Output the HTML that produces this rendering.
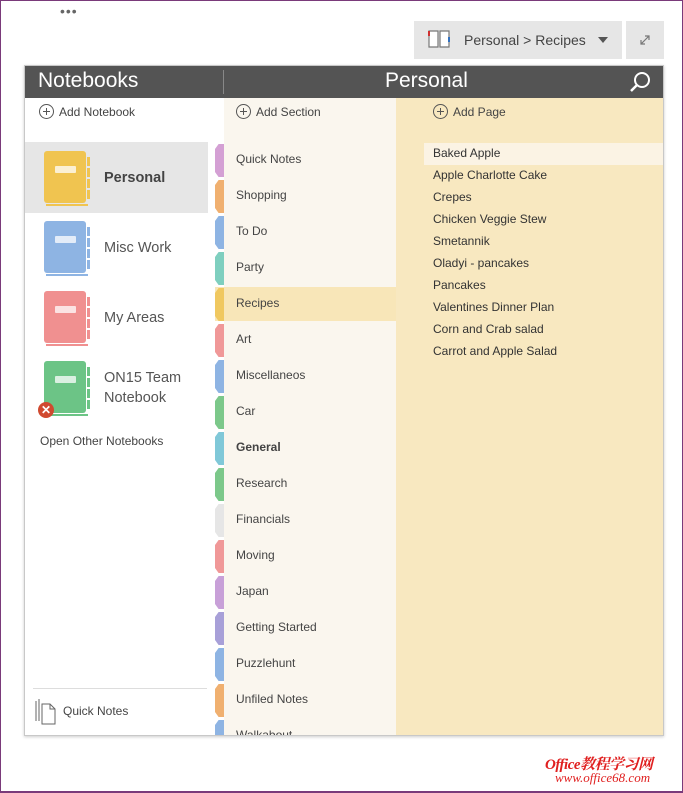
<!DOCTYPE html>
<html><head><style>
*{margin:0;padding:0;box-sizing:border-box}
body{width:683px;height:793px;position:relative;background:#fff;font-family:"Segoe UI","Liberation Sans",sans-serif;overflow:hidden;color:#444}
.frame{position:absolute;left:0;top:0;width:683px;height:793px;border:1px solid #7a3a7a;border-width:1px 1px 2px 1px}
.abs{position:absolute}
.panel{position:absolute;left:24px;top:65px;width:640px;height:671px;border:1px solid #c8c8c8;box-shadow:0 1px 3px rgba(0,0,0,.2);overflow:hidden;background:#fff}
.hdr{position:absolute;left:0;top:0;width:640px;height:32px;background:#545454;color:#fff}
.sec{position:absolute;left:199px;top:32px;width:172px;height:640px;background:#faf6ee}
.pgs{position:absolute;left:371px;top:32px;width:269px;height:640px;background:#f8e8c0}
.add{position:absolute;font-size:12px;color:#444;display:flex;align-items:center;gap:5px}
.plus{width:15px;height:15px;border:1.3px solid #555;border-radius:50%;position:relative}
.plus:before{content:"";position:absolute;left:5.5px;top:2.5px;width:1.3px;height:7.5px;background:#555}
.plus:after{content:"";position:absolute;left:2.5px;top:5.5px;width:7.5px;height:1.3px;background:#555}
.st{position:absolute;left:190px;width:9px;height:33px;clip-path:polygon(100% 0,40% 0,0 15%,0 85%,40% 100%,100% 100%)}
.sl{position:absolute;left:211px;font-size:12px;color:#444}
.pl{position:absolute;left:408px;font-size:12px;color:#333}
.book{position:absolute;width:46px;height:56px}
.book .c{position:absolute;left:0;top:0;width:42px;height:52px;border-radius:3px}
.book .lb{position:absolute;left:11px;top:15px;width:21px;height:7px;background:rgba(255,255,255,.75);border-radius:1px}
.book .e{position:absolute;left:43px;top:6px;width:3px;height:44px;background-image:repeating-linear-gradient(to bottom,currentColor 0 9px,transparent 9px 11px)}
.book .b{position:absolute;left:2px;top:53px;width:42px;height:2px}
.nb{position:absolute;left:79px;font-size:14.5px;color:#555;line-height:20px}
</style></head><body>
<div class="frame"></div>
<div class="abs" style="left:60px;top:3px;font-size:14px;color:#666;letter-spacing:1px">•••</div>
<div class="abs" style="left:414px;top:21px;width:208px;height:38px;background:#e6e6e6"></div>
<svg class="abs" style="left:428px;top:29px" width="24" height="20" viewBox="0 0 24 20"><path d="M1 2h9v16H1zM12 2h9v16h-9z" fill="#fff" stroke="#777" stroke-width="1.2"/><path d="M1 2v5" stroke="#d03030" stroke-width="2"/><path d="M21 8v5" stroke="#3070c0" stroke-width="2"/></svg>
<div class="abs" style="left:464px;top:32px;font-size:14px;color:#444">Personal &gt; Recipes</div>
<div class="abs" style="left:598px;top:37px;width:0;height:0;border-left:5px solid transparent;border-right:5px solid transparent;border-top:6px solid #555"></div>
<div class="abs" style="left:626px;top:21px;width:38px;height:38px;background:#e6e6e6"></div>
<svg class="abs" style="left:638px;top:33px" width="14" height="14"><path d="M3 11L11 3M7 3h4v4M3 7v4h4" stroke="#777" fill="none" stroke-width="1.2"/></svg>
<div class="panel">
 <div class="hdr">
  <div class="abs" style="left:13px;top:3px;font-size:21px">Notebooks</div>
  <div class="abs" style="left:198px;top:4px;width:1px;height:24px;background:#888"></div>
  <div class="abs" style="left:360px;top:3px;font-size:21px">Personal</div>
  <svg class="abs" style="left:603px;top:5px" width="24" height="22"><circle cx="14" cy="9" r="7" stroke="#fff" stroke-width="2" fill="none"/><path d="M9 14L3 20" stroke="#fff" stroke-width="2.5"/></svg>
 </div>
 <div class="add" style="left:14px;top:38px"><span class="plus"></span>Add Notebook</div>
 <div class="abs" style="left:0;top:76px;width:183px;height:71px;background:#e6e6e6"></div>
 <div class="book" style="left:19px;top:85px;color:#f0c450"><div class="c" style="background:#f0c450"></div><div class="lb"></div><div class="e"></div><div class="b" style="background:#f0c450"></div></div>
 <div class="nb" style="top:102px;font-weight:bold;color:#444">Personal</div>
 <div class="book" style="left:19px;top:155px;color:#8eb4e3"><div class="c" style="background:#8eb4e3"></div><div class="lb"></div><div class="e"></div><div class="b" style="background:#8eb4e3"></div></div>
 <div class="nb" style="top:172px">Misc Work</div>
 <div class="book" style="left:19px;top:225px;color:#f09090"><div class="c" style="background:#f09090"></div><div class="lb"></div><div class="e"></div><div class="b" style="background:#f09090"></div></div>
 <div class="nb" style="top:242px">My Areas</div>
 <div class="book" style="left:19px;top:295px;color:#6cc486"><div class="c" style="background:#6cc486"></div><div class="lb"></div><div class="e"></div><div class="b" style="background:#6cc486"></div></div>
 <div class="abs" style="left:13px;top:336px;width:16px;height:16px;border-radius:50%;background:#d04a30;color:#fff;font-size:12px;line-height:16px;text-align:center;font-weight:bold">✕</div>
 <div class="nb" style="top:302px">ON15 Team<br>Notebook</div>
 <div class="abs" style="left:15px;top:368px;font-size:12px;color:#444">Open Other Notebooks</div>
 <div class="abs" style="left:8px;top:622px;width:174px;height:1px;background:#ddd"></div>
 <svg class="abs" style="left:10px;top:633px" width="22" height="26"><path d="M1 2v20M4 0v22M7 5h8l5 5v15H7z M15 5v5h5" stroke="#666" fill="#fff" stroke-width="1"/></svg>
 <div class="abs" style="left:38px;top:638px;font-size:12px;color:#444">Quick Notes</div>
 <div class="sec"></div>
 <div class="pgs"></div>
 <div class="add" style="left:211px;top:38px"><span class="plus"></span>Add Section</div>
 <div class="add" style="left:408px;top:38px"><span class="plus"></span>Add Page</div>
 <div class="abs" style="left:190px;top:221px;width:181px;height:34px;background:#f8e6b8"></div>
 <div class="st" style="top:78px;background:#d4a0d4"></div><div class="sl" style="top:86px">Quick Notes</div>
 <div class="st" style="top:114px;background:#f0b070"></div><div class="sl" style="top:122px">Shopping</div>
 <div class="st" style="top:150px;background:#8eb4e3"></div><div class="sl" style="top:158px">To Do</div>
 <div class="st" style="top:186px;background:#7fcfbf"></div><div class="sl" style="top:194px">Party</div>
 <div class="st" style="top:222px;background:#f0c860"></div><div class="sl" style="top:230px">Recipes</div>
 <div class="st" style="top:258px;background:#f09898"></div><div class="sl" style="top:266px">Art</div>
 <div class="st" style="top:294px;background:#8eb4e3"></div><div class="sl" style="top:302px">Miscellaneos</div>
 <div class="st" style="top:330px;background:#7cc88a"></div><div class="sl" style="top:338px">Car</div>
 <div class="st" style="top:366px;background:#80c8d8"></div><div class="sl" style="top:374px;font-weight:bold">General</div>
 <div class="st" style="top:402px;background:#7cc88a"></div><div class="sl" style="top:410px">Research</div>
 <div class="st" style="top:438px;background:#e6e6e6"></div><div class="sl" style="top:446px">Financials</div>
 <div class="st" style="top:474px;background:#f09898"></div><div class="sl" style="top:482px">Moving</div>
 <div class="st" style="top:510px;background:#c8a0d8"></div><div class="sl" style="top:518px">Japan</div>
 <div class="st" style="top:546px;background:#a8a0d8"></div><div class="sl" style="top:554px">Getting Started</div>
 <div class="st" style="top:582px;background:#8eb4e3"></div><div class="sl" style="top:590px">Puzzlehunt</div>
 <div class="st" style="top:618px;background:#f0b070"></div><div class="sl" style="top:626px">Unfiled Notes</div>
 <div class="st" style="top:654px;background:#8eb4e3"></div><div class="sl" style="top:662px">Walkabout</div>
 <div class="abs" style="left:399px;top:77px;width:241px;height:22px;background:#fbf3e4"></div>
 <div class="pl" style="top:80px">Baked Apple</div>
 <div class="pl" style="top:102px">Apple Charlotte Cake</div>
 <div class="pl" style="top:124px">Crepes</div>
 <div class="pl" style="top:146px">Chicken Veggie Stew</div>
 <div class="pl" style="top:168px">Smetannik</div>
 <div class="pl" style="top:190px">Oladyi - pancakes</div>
 <div class="pl" style="top:212px">Pancakes</div>
 <div class="pl" style="top:234px">Valentines Dinner Plan</div>
 <div class="pl" style="top:256px">Corn and Crab salad</div>
 <div class="pl" style="top:278px">Carrot and Apple Salad</div>
</div>
<div class="abs" style="left:545px;top:753px;font-family:'Liberation Serif','Noto Serif CJK SC',serif;font-style:italic;font-size:15px;color:#e02020;font-weight:bold;letter-spacing:-0.5px">Office教程学习网</div>
<div class="abs" style="left:555px;top:770px;font-family:'Liberation Serif',serif;font-style:italic;font-size:13px;color:#e02020">www.office68.com</div>
</body></html>
